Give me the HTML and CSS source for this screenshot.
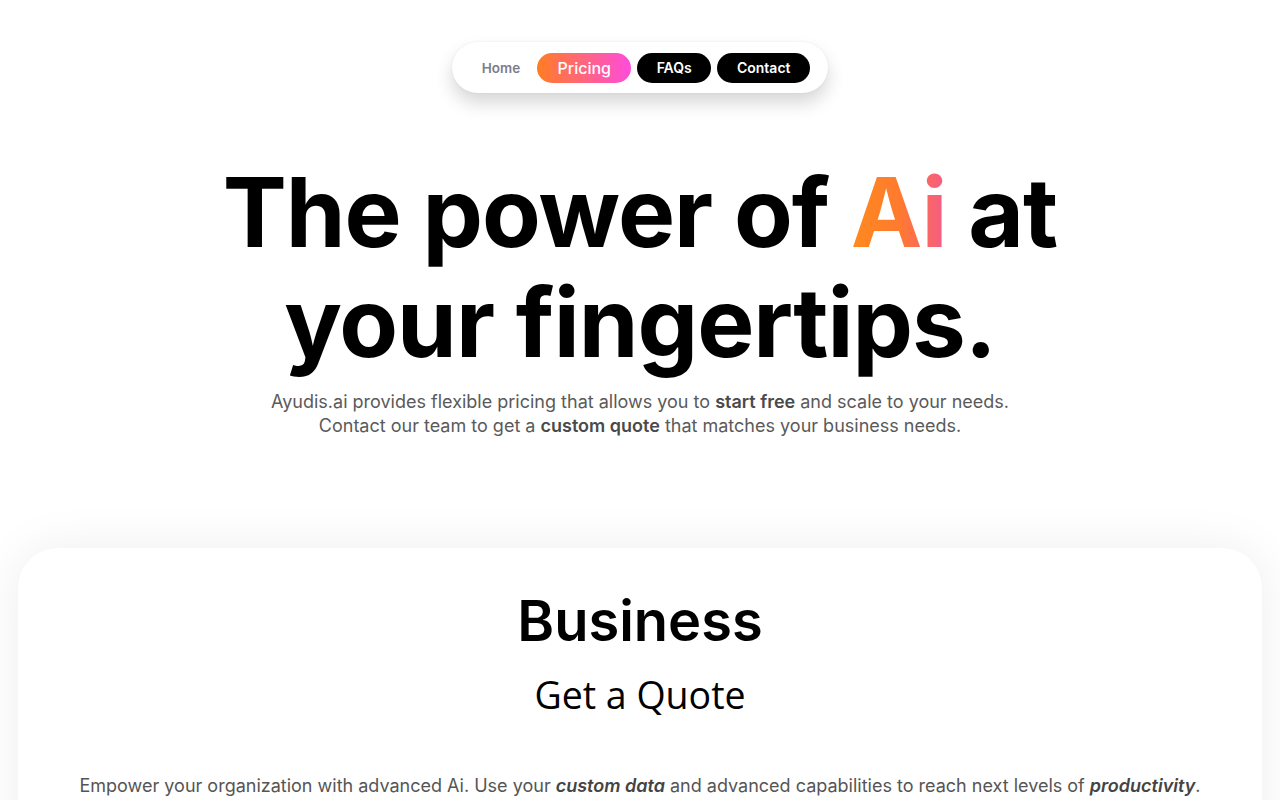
FILE: index.html
```html
<!DOCTYPE html>
<html lang="en">
<head>
<meta charset="utf-8">
<title>Ayudis.ai Pricing</title>
<link rel="stylesheet" href="styles.css">
</head>
<body>
<header class="top">
  <nav class="nav">
    <a class="nav-home" href="#">Home</a>
    <a class="nav-pill nav-active" href="#">Pricing</a>
    <a class="nav-pill nav-dark" href="#">FAQs</a>
    <a class="nav-pill nav-dark nav-contact" href="#">Contact</a>
  </nav>
</header>
<section class="hero">
  <h1 class="title">The power of <span class="grad">Ai</span> at<br>your fingertips.</h1>
  <p class="lead">Ayudis.ai provides flexible pricing that allows you to <strong>start free</strong> and scale to your needs.<br>Contact our team to get a <strong>custom quote</strong> that matches your business needs.</p>
</section>
<section class="card">
  <h2 class="plan">Business</h2>
  <h3 class="quote">Get a Quote</h3>
  <p class="desc">Empower your organization with advanced Ai. Use your <em>custom data</em> and advanced capabilities to reach next levels of <em>productivity</em>.</p>
</section>
</body>
</html>
```
FILE: styles.css
```css
html, body { margin: 0; padding: 0; background: #fff; }
body { font-family: Inter, "Liberation Sans", sans-serif; color: #000; overflow: hidden; height: 800px; }
a { text-decoration: none; }

.top { display: flex; justify-content: center; padding-top: 42px; }
.nav {
  display: flex; align-items: center; gap: 6px;
  height: 51px; box-sizing: border-box;
  padding: 0 18px 0 30px;
  background: #fff; border-radius: 999px;
  box-shadow: 0 10px 18px rgba(0,0,0,0.16), 0 0 2px rgba(0,0,0,0.08);
}
.nav-home { color: #7c7c8c; font-size: 13.5px; font-weight: 600; margin-right: 11px; }
.nav-pill {
  display: flex; align-items: center; justify-content: center;
  height: 30px; border-radius: 999px; color: #fff; font-weight: 600; font-size: 14px;
}
.nav-active {
  width: 94px; font-size: 16px; font-weight: 500;
  background: linear-gradient(90deg, #ff7d23 0%, #ff4cdc 100%);
}
.nav-dark { background: #000; width: 74px; }
.nav-contact { width: 93px; }

.hero { text-align: center; padding-top: 64px; }
.title {
  margin: 0; font-family: Inter, sans-serif; font-weight: 700;
  font-size: 96px; line-height: 110px; letter-spacing: -1px;
}
.grad {
  background: linear-gradient(90deg, #ff8a1e 0%, #ff7a2e 50%, #f55a8a 100%);
  -webkit-background-clip: text; background-clip: text; color: transparent;
}
.lead { margin: 13px 0 0; font-size: 18px; line-height: 24px; color: #5a5a5a; }
.lead strong { font-weight: 600; color: #4a4a4a; }

.card {
  margin: 110px 18px 0; min-height: 400px;
  background: #fff; border-radius: 40px;
  box-shadow: 0 0 50px rgba(0,0,0,0.07);
  text-align: center; padding-top: 38px;
}
.plan { margin: 0; font-family: Inter, sans-serif; font-weight: 600; font-size: 56px; line-height: 70px; }
.quote { margin: 14px 0 0; font-family: "Open Sans", sans-serif; font-weight: 400; font-size: 37.5px; line-height: 50px; }
.desc { margin: 53px 0 0; font-size: 18px; line-height: 26px; color: #555; }
.desc em { font-weight: 600; color: #444; }
```
